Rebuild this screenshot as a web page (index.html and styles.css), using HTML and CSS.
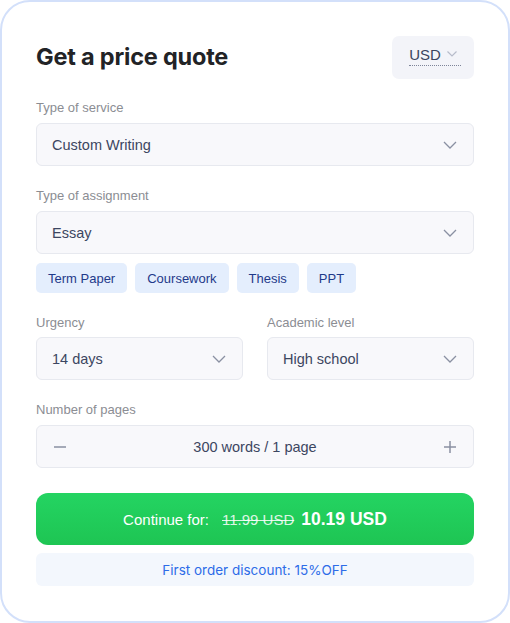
FILE: index.html
```html
<!DOCTYPE html>
<html>
<head>
<meta charset="utf-8">
<link rel="stylesheet" href="styles.css">
</head>
<body>
<div class="card">
  <div class="header">
    <h1 class="title">Get a price quote</h1>
    <div class="currency">
      <span class="cur-text">USD</span>
      <svg class="cur-chev" width="10" height="6" viewBox="0 0 10 6"><path d="M0.5 0.5 L5 5 L9.5 0.5" fill="none" stroke="#b7bccb" stroke-width="1.2"/></svg>
    </div>
  </div>

  <div class="field">
    <div class="label">Type of service</div>
    <div class="select"><span>Custom Writing</span><svg class="chev" width="14" height="8" viewBox="0 0 14 8"><path d="M1 1 L7 7 L13 1" fill="none" stroke="#8a90a2" stroke-width="1.3"/></svg></div>
  </div>

  <div class="field">
    <div class="label">Type of assignment</div>
    <div class="select"><span>Essay</span><svg class="chev" width="14" height="8" viewBox="0 0 14 8"><path d="M1 1 L7 7 L13 1" fill="none" stroke="#8a90a2" stroke-width="1.3"/></svg></div>
    <div class="chips">
      <span class="chip">Term Paper</span>
      <span class="chip">Coursework</span>
      <span class="chip">Thesis</span>
      <span class="chip">PPT</span>
    </div>
  </div>

  <div class="row">
    <div class="cell">
      <div class="label">Urgency</div>
      <div class="select"><span>14 days</span><svg class="chev" width="14" height="8" viewBox="0 0 14 8"><path d="M1 1 L7 7 L13 1" fill="none" stroke="#8a90a2" stroke-width="1.3"/></svg></div>
    </div>
    <div class="cell">
      <div class="label">Academic level</div>
      <div class="select"><span>High school</span><svg class="chev" width="14" height="8" viewBox="0 0 14 8"><path d="M1 1 L7 7 L13 1" fill="none" stroke="#8a90a2" stroke-width="1.3"/></svg></div>
    </div>
  </div>

  <div class="field field-last">
    <div class="label">Number of pages</div>
    <div class="stepper">
      <svg width="14" height="14" viewBox="0 0 14 14"><path d="M1 7 H13" stroke="#8a90a2" stroke-width="1.5"/></svg>
      <span>300 words / 1 page</span>
      <svg width="14" height="14" viewBox="0 0 14 14"><path d="M1 7 H13 M7 1 V13" stroke="#8a90a2" stroke-width="1.5"/></svg>
    </div>
  </div>

  <button class="cta"><span class="cta-label">Continue for:</span><s class="old">11.99 USD</s><b class="new">10.19 USD</b></button>
  <div class="discount">First order discount: 15%OFF</div>
</div>
</body>
</html>
```
FILE: styles.css
```css
* { box-sizing: border-box; }
html, body { margin: 0; padding: 0; background: #ffffff; }
body { font-family: "Liberation Sans", Arial, sans-serif; }

.card {
  width: 510px;
  height: 623px;
  border: 2px solid #d3e0fa;
  border-radius: 30px;
  padding: 34px 34px 0 34px;
  background: #fff;
}

.header {
  display: flex;
  justify-content: space-between;
  align-items: center;
  height: 43px;
  margin-bottom: 21px;
}
.title {
  margin: 0;
  font-family: Inter, "Noto Sans", sans-serif;
  font-weight: 700;
  font-size: 23.5px;
  letter-spacing: -0.2px;
  color: #222326;
  position: relative;
  top: -1px;
}
.currency {
  width: 82px;
  height: 43px;
  background: #f3f4f9;
  border-radius: 7px;
  display: flex;
  align-items: center;
  justify-content: center;
  gap: 6px;
  padding-bottom: 4px;
}
.cur-text {
  font-size: 15px;
  color: #3b4560;
  border-bottom: 1px dotted #7d8499;
  padding-bottom: 2px;
  padding-right: 20px;
  margin-right: -20px;
  line-height: 17px;
}
.cur-chev { position: relative; top: -2px; }

.field { margin-bottom: 22px; }
.field-last { margin-bottom: 25px; }
.label {
  font-size: 13px;
  line-height: 16px;
  color: #8b8d93;
  margin-bottom: 7px;
}
.cell .label { margin-bottom: 6px; }
.select {
  height: 43px;
  border: 1px solid #e7e9ef;
  background: #f8f8fb;
  border-radius: 6px;
  display: flex;
  align-items: center;
  justify-content: space-between;
  padding: 0 16px 0 15px;
  font-size: 14.5px;
  color: #3c4661;
}
.chev { display: block; }

.chips {
  display: flex;
  gap: 8px;
  margin-top: 9px;
}
.chip {
  height: 30px;
  display: flex;
  align-items: center;
  padding: 0 12px;
  background: #e4eefd;
  color: #1f3a8a;
  border-radius: 5px;
  font-size: 13px;
}

.row {
  display: grid;
  grid-template-columns: 1fr 1fr;
  gap: 24px;
  margin-bottom: 22px;
}

.stepper {
  height: 43px;
  border: 1px solid #e7e9ef;
  background: #f8f8fb;
  border-radius: 6px;
  display: flex;
  align-items: center;
  justify-content: space-between;
  padding: 0 16px 0 16px;
  font-size: 14.5px;
  color: #3c4661;
}
.stepper svg { display: block; }

.cta {
  display: flex;
  width: 100%;
  height: 52px;
  align-items: center;
  justify-content: center;
  gap: 7px;
  border: none;
  border-radius: 12px;
  background: linear-gradient(180deg, #24d462 0%, #1ec553 100%);
  color: #fff;
  font-family: "Liberation Sans", Arial, sans-serif;
  padding: 0;
}
.cta-label { font-size: 15px; margin-right: 6px; }
.old { font-size: 15px; color: rgba(255,255,255,0.85); }
.new { font-size: 17.5px; font-weight: 700; }

.discount {
  margin-top: 8px;
  height: 33px;
  background: #f3f7fd;
  border-radius: 6px;
  display: flex;
  align-items: center;
  justify-content: center;
  font-family: Inter, "Noto Sans", sans-serif;
  font-size: 13.5px;
  color: #2d6ce8;
}
```
